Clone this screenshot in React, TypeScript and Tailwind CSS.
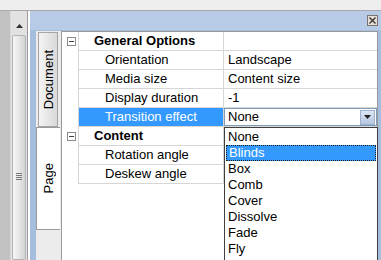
import React from "react";

type Row =
  | { kind: "group"; label: string }
  | { kind: "prop"; label: string; value: string; selected?: boolean; combo?: boolean };

const rows: Row[] = [
  { kind: "group", label: "General Options" },
  { kind: "prop", label: "Orientation", value: "Landscape" },
  { kind: "prop", label: "Media size", value: "Content size" },
  { kind: "prop", label: "Display duration", value: "-1" },
  { kind: "prop", label: "Transition effect", value: "None", selected: true, combo: true },
  { kind: "group", label: "Content" },
  { kind: "prop", label: "Rotation angle", value: "" },
  { kind: "prop", label: "Deskew angle", value: "" },
];

const effects = ["None", "Blinds", "Box", "Comb", "Cover", "Dissolve", "Fade", "Fly"];

function MinusBox() {
  return (
    <span className="flex h-[9px] w-[9px] items-center justify-center border border-[#8c8c8c] bg-white">
      <span className="h-px w-[5px] bg-[#404040]" />
    </span>
  );
}

function CloseButton() {
  return (
    <span className="flex h-[11px] w-[11px] items-center justify-center border border-[#7a7470] bg-[#e6ded6]">
      <svg width="7" height="7" viewBox="0 0 7 7">
        <path d="M0.5 0.5 L6.5 6.5 M6.5 0.5 L0.5 6.5" stroke="#3a3430" strokeWidth="1.4" />
      </svg>
    </span>
  );
}

function VerticalTab({ label, active }: { label: string; active?: boolean }) {
  return (
    <div
      className={
        active
          ? "flex h-[103px] w-[24px] items-center justify-center border-y border-l border-[#9a9a9a] bg-white"
          : "ml-[2px] mr-[2px] flex h-[95px] w-[20px] items-center justify-center border border-[#a5a5a5] bg-gradient-to-r from-[#f4f4f4] to-[#d9d9d9]"
      }
    >
      <span className="rotate-180 text-[13px] leading-none text-black [writing-mode:vertical-rl]">{label}</span>
    </div>
  );
}

export default function App() {
  return (
    <div className="relative h-[260px] w-[381px] overflow-hidden bg-[#ececec] font-['Liberation_Sans',Arial,sans-serif] text-[13px] text-black">
      <div className="h-[11px] border-b border-[#a9a9a9] bg-[#eeeeee]" />
      <div className="flex h-[249px]">
        <div className="w-[11px] border-r border-[#d8d8d8] bg-[#c2c2c2]" />
        {/* scrollbar */}
        <div className="flex w-[17px] flex-col border-r border-[#9a9a9a] bg-[#e2e2e2]">
          <div className="mt-[9px] flex h-[12px] items-center justify-center">
            <svg width="7" height="4" viewBox="0 0 7 4">
              <path d="M0 4 L3.5 0 L7 4 Z" fill="#303030" />
            </svg>
          </div>
          <div className="mx-[1px] mt-[3px] flex flex-1 flex-col items-center rounded-[2px] border border-[#b5b5b5] bg-gradient-to-r from-[#f6f6f6] via-[#e6e6e6] to-[#d2d2d2] pt-[137px]">
            <div className="flex flex-col gap-[1px]">
              <span className="h-px w-[6px] bg-[#7a7a7a]" />
              <span className="h-px w-[6px] bg-[#7a7a7a]" />
              <span className="h-px w-[6px] bg-[#7a7a7a]" />
              <span className="h-px w-[6px] bg-[#7a7a7a]" />
            </div>
          </div>
        </div>
        {/* panel */}
        <div className="flex flex-1 flex-col border-l-2 border-white bg-[#a6bedd]">
          <div className="flex h-[19px] items-center justify-end bg-[#b7cbe6] pr-[3px]">
            <CloseButton />
          </div>
          <div className="mt-[1px] flex flex-1">
            <div className="w-[6px]" />
            <div className="flex w-[25px] flex-col items-start bg-[#ececec] pt-[1px]">
              <VerticalTab label="Document" />
              <VerticalTab label="Page" active />
            </div>
            <div className="mr-[3px] flex flex-1 flex-col border-x border-t border-[#9a9a9a] bg-white">
              {rows.map((r, i) => (
                <div key={i} className="flex h-[19px]">
                  <div className="flex w-[17px] items-center justify-center border-r border-[#d6d6d6] pl-[5px] pr-[2px]">
                    {r.kind === "group" && <MinusBox />}
                  </div>
                  <div
                    className={
                      "flex w-[145px] items-center border-b border-r border-[#d6d6d6] " +
                      (r.kind === "group" ? "pl-[15px] font-bold" : "pl-[26px]") +
                      (r.kind === "prop" && r.selected ? " bg-[#3399ff] text-white" : "")
                    }
                  >
                    {r.label}
                  </div>
                  <div className="flex flex-1 items-center border-b border-[#d6d6d6]">
                    {r.kind === "prop" && r.combo ? (
                      <div className="flex h-full flex-1 items-center border border-[#7f9db9] bg-white pl-[3px]">
                        <span className="flex-1">{r.value}</span>
                        <span className="mr-px flex h-[15px] w-[15px] items-center justify-center border border-[#9bb0cf] bg-gradient-to-b from-[#dce6f4] to-[#b7c8e2]">
                          <svg width="7" height="4" viewBox="0 0 7 4">
                            <path d="M0 0 L7 0 L3.5 4 Z" fill="#202020" />
                          </svg>
                        </span>
                      </div>
                    ) : (
                      r.kind === "prop" && <span className="pl-[4px]">{r.value}</span>
                    )}
                  </div>
                </div>
              ))}
            </div>
          </div>
        </div>
      </div>
      {/* open dropdown list */}
      <div className="absolute left-[224px] top-[127px] h-[140px] w-[154px] border border-[#404040] bg-white p-px">
        {effects.map((e) => (
          <div
            key={e}
            className={
              "flex h-[16px] items-center pl-[2px] " +
              (e === "Blinds" ? "border border-dotted border-[#202020] bg-[#3399ff] pl-[1px] text-white" : "")
            }
          >
            {e}
          </div>
        ))}
      </div>
    </div>
  );
}
